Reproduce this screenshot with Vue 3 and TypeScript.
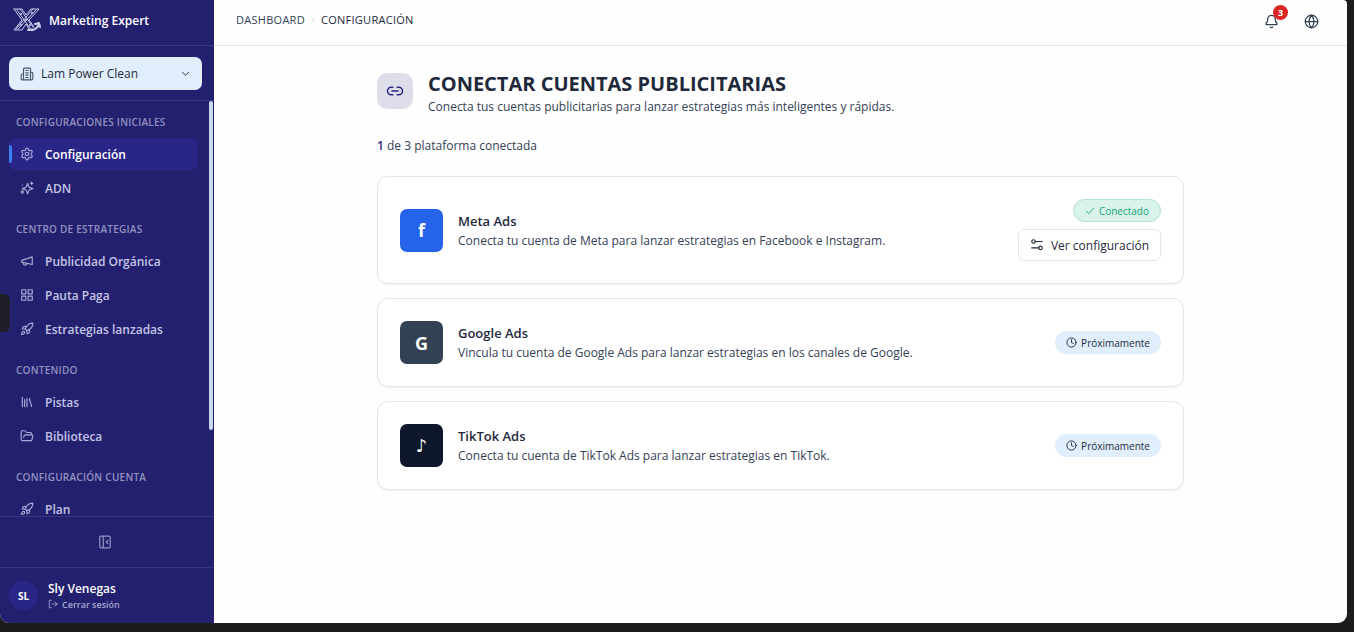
<script setup lang="ts">
interface NavItem {
  label: string
  icon: string
  active?: boolean
}
interface NavGroup {
  title: string
  items: NavItem[]
}
interface Platform {
  id: string
  name: string
  mark: string
  description: string
  connected: boolean
}

const icons: Record<string, string[]> = {
  settings: [
    'M9.671 4.136a2.34 2.34 0 0 1 4.659 0 2.34 2.34 0 0 0 3.319 1.915 2.34 2.34 0 0 1 2.33 4.033 2.34 2.34 0 0 0 0 3.831 2.34 2.34 0 0 1-2.33 4.033 2.34 2.34 0 0 0-3.319 1.915 2.34 2.34 0 0 1-4.659 0 2.34 2.34 0 0 0-3.32-1.915 2.34 2.34 0 0 1-2.33-4.033 2.34 2.34 0 0 0 0-3.831A2.34 2.34 0 0 1 6.35 6.051a2.34 2.34 0 0 0 3.319-1.915',
    'M9 12a3 3 0 1 0 6 0a3 3 0 1 0-6 0',
  ],
  sparkles: [
    'M13 4l2 5.500a3 3 0 0 0 1.500 1.500L22 13l-5.500 2a3 3 0 0 0-1.500 1.500L13 22l-2-5.500A3 3 0 0 0 9.500 15L4 13l5.500-2A3 3 0 0 0 11 9.500z',
    'M20 2v4M22 4h-4M2 19a2 2 0 1 0 4 0a2 2 0 1 0-4 0M4 7h.01',
  ],
  megaphone: ['M21 5 3 11v3l18 4zM11.600 16.800a3 3 0 1 1-5.800-1.600'],
  grid: ['M3 3h7v7H3zM14 3h7v7h-7zM14 14h7v7h-7zM3 14h7v7H3z'],
  rocket: [
    'M4.500 16.500c-1.500 1.260-2 5-2 5s3.740-.5 5-2c.71-.84.7-2.130-.09-2.910a2.180 2.180 0 0 0-2.910-.09z',
    'M12 15l-3-3a22 22 0 0 1 2-3.950A12.880 12.880 0 0 1 22 2c0 2.720-.78 7.500-6 11a22.350 22.350 0 0 1-4 2z',
    'M9 12H4s.55-3.030 2-4c1.620-1.080 5 0 5 0M12 15v5s3.030-.55 4-2c1.080-1.620 0-5 0-5',
  ],
  library: ['M4 4v16M8 8v12M12 6v14M16 6l4 14'],
  folder: [
    'M6 14l1.500-2.900A2 2 0 0 1 9.240 10H20a2 2 0 0 1 1.940 2.500l-1.540 6a2 2 0 0 1-1.950 1.500H4a2 2 0 0 1-2-2V5a2 2 0 0 1 2-2h3.900a2 2 0 0 1 1.690.9l.81 1.200a2 2 0 0 0 1.670.9H18a2 2 0 0 1 2 2v2',
  ],
}

const groups: NavGroup[] = [
  {
    title: 'CONFIGURACIONES INICIALES',
    items: [
      { label: 'Configuración', icon: 'settings', active: true },
      { label: 'ADN', icon: 'sparkles' },
    ],
  },
  {
    title: 'CENTRO DE ESTRATEGIAS',
    items: [
      { label: 'Publicidad Orgánica', icon: 'megaphone' },
      { label: 'Pauta Paga', icon: 'grid' },
      { label: 'Estrategias lanzadas', icon: 'rocket' },
    ],
  },
  {
    title: 'CONTENIDO',
    items: [
      { label: 'Pistas', icon: 'library' },
      { label: 'Biblioteca', icon: 'folder' },
    ],
  },
  {
    title: 'CONFIGURACIÓN CUENTA',
    items: [{ label: 'Plan', icon: 'rocket' }],
  },
]

const platforms: Platform[] = [
  {
    id: 'meta',
    name: 'Meta Ads',
    mark: 'f',
    description: 'Conecta tu cuenta de Meta para lanzar estrategias en Facebook e Instagram.',
    connected: true,
  },
  {
    id: 'google',
    name: 'Google Ads',
    mark: 'G',
    description: 'Vincula tu cuenta de Google Ads para lanzar estrategias en los canales de Google.',
    connected: false,
  },
  {
    id: 'tiktok',
    name: 'TikTok Ads',
    mark: '♪',
    description: 'Conecta tu cuenta de TikTok Ads para lanzar estrategias en TikTok.',
    connected: false,
  },
]
</script>

<template>
  <div class="frame">
    <div class="window">
      <aside class="sidebar">
        <div class="brand">
          <svg class="logo" viewBox="0 0 28 26" fill="none" stroke="currentColor" aria-hidden="true">
            <path d="M1 2h8l4 6 5-6h8L16 13l5 7M1 2l8 11L1 23h8l4-6 3 5h4M4 3l13 18M7 2l13 18M23 3L5 22M20 2L3 22" />
            <path d="M15 23h5c3-1 5-3 6-6M22 17l4-1 1 4" stroke-width="2" />
            <path d="M8 7h.01M13 13h.01M17 18h.01M19 6h.01M8 18h.01" stroke-width="2" stroke-linecap="round" />
          </svg>
          <span>Marketing Expert</span>
        </div>
        <div class="workspace">
          <button type="button" class="workspace-button">
            <svg class="icon-m" viewBox="0 0 24 24" aria-hidden="true">
              <path d="M6 22V4a2 2 0 0 1 2-2h8a2 2 0 0 1 2 2v18zM6 12H4a2 2 0 0 0-2 2v6a2 2 0 0 0 2 2h2M18 9h2a2 2 0 0 1 2 2v9a2 2 0 0 1-2 2h-2M10 6h4M10 10h4M10 14h4M10 18h4" />
            </svg>
            <span>Lam Power Clean</span>
            <svg class="icon-s chevron" viewBox="0 0 24 24" aria-hidden="true"><path d="M5 9l7 7 7-7" /></svg>
          </button>
        </div>
        <nav class="nav">
          <section v-for="group in groups" :key="group.title" class="group">
            <h2>{{ group.title }}</h2>
            <a v-for="item in group.items" :key="item.label" href="#" class="nav-item" :class="{ active: item.active }">
              <svg class="icon-m" viewBox="0 0 24 24" aria-hidden="true">
                <path v-for="d in icons[item.icon]" :key="d" :d="d" />
              </svg>
              <span>{{ item.label }}</span>
            </a>
          </section>
          <span class="scroll-thumb"></span>
        </nav>
        <div class="collapse">
          <button type="button" aria-label="Contraer menú">
            <svg class="icon-m" viewBox="0 0 24 24" aria-hidden="true">
              <path d="M5 2h14a2 2 0 0 1 2 2v16a2 2 0 0 1-2 2H5a2 2 0 0 1-2-2V4a2 2 0 0 1 2-2zM9 2v20M17 9l-3 3 3 3" />
            </svg>
          </button>
        </div>
        <div class="user">
          <span class="avatar">SL</span>
          <div class="user-info">
            <strong>Sly Venegas</strong>
            <button type="button">
              <svg class="icon-xs" viewBox="0 0 24 24" aria-hidden="true"><path d="M8 3H3v18h5M10 12h12M17 7l5 5-5 5" /></svg>
              <span>Cerrar sesión</span>
            </button>
          </div>
        </div>
        <span class="edge-tab"></span>
      </aside>

      <div class="main">
        <header class="topbar">
          <nav class="crumbs" aria-label="Ruta">
            <a href="#">DASHBOARD</a>
            <svg viewBox="0 0 6 8" aria-hidden="true"><path d="M2 2l2 2-2 2" /></svg>
            <span>CONFIGURACIÓN</span>
          </nav>
          <div class="tools">
            <button type="button" aria-label="Notificaciones">
              <svg class="icon-l" viewBox="0 0 24 24" aria-hidden="true">
                <path d="M10.300 21a2 2 0 0 0 3.400 0M3.300 15.300A1 1 0 0 0 4 17h16a1 1 0 0 0 .7-1.700C19.400 14 18 12.500 18 8A6 6 0 0 0 6 8c0 4.500-1.400 6-2.700 7.300" />
              </svg>
              <span class="count">3</span>
            </button>
            <button type="button" aria-label="Idioma">
              <svg class="icon-l" viewBox="0 0 24 24" aria-hidden="true">
                <circle cx="12" cy="12" r="10" /><path d="M12 2a14.500 14.500 0 0 0 0 20 14.500 14.500 0 0 0 0-20M2 12h20" />
              </svg>
            </button>
          </div>
        </header>
        <main class="content">
          <div class="heading">
            <span class="heading-icon">
              <svg viewBox="0 0 24 24" aria-hidden="true"><path d="M9 17H7A5 5 0 0 1 7 7h2M15 7h2a5 5 0 1 1 0 10h-2M8 12h8" /></svg>
            </span>
            <div>
              <h1>CONECTAR CUENTAS PUBLICITARIAS</h1>
              <p>Conecta tus cuentas publicitarias para lanzar estrategias más inteligentes y rápidas.</p>
            </div>
          </div>
          <p class="summary"><b>1</b> de 3 plataforma conectada</p>
          <div class="cards">
            <article v-for="p in platforms" :key="p.id" class="card">
              <span class="mark" :class="p.id">{{ p.mark }}</span>
              <div class="card-text">
                <h3>{{ p.name }}</h3>
                <p>{{ p.description }}</p>
              </div>
              <div v-if="p.connected" class="actions">
                <span class="badge ok">
                  <svg class="icon-xs" viewBox="0 0 24 24" aria-hidden="true"><path d="M21 5L9 18l-6-6" /></svg>Conectado
                </span>
                <button type="button" class="configure">
                  <svg class="icon-m" viewBox="0 0 24 24" aria-hidden="true">
                    <path d="M9 6h12M15 17H3" /><circle cx="18" cy="17" r="3" /><circle cx="6" cy="6" r="3" />
                  </svg>
                  <span>Ver configuración</span>
                </button>
              </div>
              <span v-else class="badge soon">
                <svg class="icon-s" viewBox="0 0 24 24" aria-hidden="true"><circle cx="12" cy="12" r="10" /><path d="M12 6v6l4 2" /></svg>Próximamente
              </span>
            </article>
          </div>
        </main>
      </div>
    </div>
  </div>
</template>

<style>
body {
  background: #1c1c1c;
}
</style>

<style scoped>
* {
  box-sizing: border-box;
}
.frame {
  display: flex;
  height: 100vh;
  padding: 0 7px 9px 0;
  background: #1c1c1c;
  font-family: 'Open Sans', 'Noto Sans', sans-serif;
  font-size: 12px;
  color: #1e293b;
}
.window {
  display: flex;
  flex: 1;
  min-width: 0;
  overflow: hidden;
  border-radius: 0 4px 9px 9px;
  background: #fefefe;
}
h1, h2, h3, p {
  margin: 0;
}
a {
  color: inherit;
  text-decoration: none;
}
button {
  display: flex;
  align-items: center;
  padding: 0;
  border: 0;
  background: none;
  color: inherit;
  font: inherit;
  cursor: pointer;
}
svg {
  flex: none;
  fill: none;
  stroke: currentColor;
  stroke-width: 2;
  stroke-linecap: round;
  stroke-linejoin: round;
}
.icon-xs { width: 10px; height: 10px; }
.icon-s { width: 11px; height: 11px; }
.icon-m { width: 14px; height: 14px; }
.icon-l { width: 15px; height: 15px; }

.sidebar {
  position: relative;
  display: flex;
  flex-direction: column;
  flex: none;
  width: 214px;
  background: #23206f;
  color: #c3c4e4;
}
.brand {
  display: flex;
  align-items: center;
  gap: 8px;
  flex: none;
  height: 46px;
  padding: 0 13px 5px;
  border-bottom: 1px solid #39377f;
  color: #ffffff;
  font-weight: 600;
}
.logo {
  width: 28px;
  height: 26px;
  color: #c8cbe8;
  stroke-width: 1;
}
.workspace {
  flex: none;
  padding: 11px 12px 10px 9px;
  border-bottom: 1px solid #39377f;
}
.workspace-button {
  width: 100%;
  height: 33px;
  gap: 7px;
  padding: 0 11px;
  border-radius: 7px;
  background: #e1effc;
  color: #1e293b;
  font-weight: 500;
}
.workspace-button .icon-m {
  color: #475569;
}
.chevron {
  margin-left: auto;
}
.nav {
  position: relative;
  flex: 1;
  min-height: 0;
  overflow: hidden;
  padding: 13px 16px 0 9px;
}
.group {
  margin-bottom: 17px;
}
.group h2 {
  margin-bottom: 8px;
  padding-left: 7px;
  color: #9392bf;
  font-size: 10px;
  font-weight: 600;
  line-height: 16px;
  letter-spacing: 0.025em;
}
.nav-item {
  display: flex;
  align-items: center;
  gap: 11px;
  height: 32px;
  padding-left: 11px;
  border-radius: 7px;
  font-weight: 600;
}
.nav-item + .nav-item {
  margin-top: 2px;
}
.nav-item svg {
  color: #a9a9d6;
}
.nav-item.active {
  position: relative;
  background: #292688;
  color: #ffffff;
}
.nav-item.active::before {
  content: '';
  position: absolute;
  left: 0;
  top: 7px;
  width: 3px;
  height: 18px;
  border-radius: 0 3px 3px 0;
  background: #3b82f6;
}
.scroll-thumb {
  position: absolute;
  top: 0;
  right: 1px;
  width: 4px;
  height: 329px;
  border-radius: 2px;
  background: #c8d8ef;
}
.collapse {
  display: flex;
  align-items: center;
  justify-content: center;
  flex: none;
  height: 51px;
  padding-right: 4px;
  border-top: 1px solid #39377f;
  color: #9897c6;
}
.user {
  display: flex;
  align-items: center;
  gap: 10px;
  flex: none;
  height: 56px;
  padding-left: 9px;
  border-top: 1px solid #39377f;
}
.avatar {
  display: flex;
  align-items: center;
  justify-content: center;
  width: 29px;
  height: 29px;
  border-radius: 50%;
  background: #292688;
  color: #ffffff;
  font-size: 10px;
  font-weight: 700;
}
.user-info strong {
  display: block;
  color: #ffffff;
  font-weight: 600;
  line-height: 17px;
}
.user-info button {
  gap: 4px;
  color: #a7a6cf;
  font-size: 9px;
  font-weight: 600;
  line-height: 15px;
}
.edge-tab {
  position: absolute;
  left: 0;
  top: 294px;
  width: 10px;
  height: 38px;
  border-radius: 0 6px 6px 0;
  background: #1f1f27;
}

.main {
  flex: 1;
  min-width: 0;
}
.topbar {
  display: flex;
  align-items: center;
  justify-content: space-between;
  height: 46px;
  padding: 0 28px 0 22px;
  border-bottom: 1px solid #e2e6ea;
}
.crumbs {
  display: flex;
  align-items: center;
  gap: 5px;
  padding-bottom: 6px;
  color: #334155;
  font-size: 11px;
  font-weight: 500;
  letter-spacing: 0.025em;
}
.crumbs svg {
  width: 6px;
  height: 8px;
  color: #dde1e6;
  stroke-width: 1;
}
.crumbs span {
  color: #1e293b;
}
.tools {
  display: flex;
  gap: 25px;
  padding-bottom: 3px;
  color: #334155;
}
.tools button {
  position: relative;
}
.count {
  position: absolute;
  left: 9px;
  top: -9px;
  width: 15px;
  height: 15px;
  border-radius: 50%;
  background: #dc2626;
  color: #ffffff;
  font-size: 9px;
  font-weight: 700;
  line-height: 15px;
  text-align: center;
}
.content {
  max-width: 807px;
  margin: 0 auto;
  padding-top: 25px;
}
.heading {
  display: flex;
  align-items: flex-start;
  gap: 15px;
}
.heading-icon {
  display: flex;
  align-items: center;
  justify-content: center;
  width: 36px;
  height: 36px;
  margin-top: 2px;
  border-radius: 10px;
  background: #dedeeb;
  color: #2b2680;
}
.heading-icon svg {
  width: 18px;
  height: 18px;
}
h1 {
  color: #1e293b;
  font-size: 20px;
  font-weight: 700;
  line-height: 26px;
}
.heading p,
.summary,
.card p {
  color: #334155;
  line-height: 20px;
}
.summary {
  margin-top: 19px;
}
.summary b {
  color: #2b2680;
  font-weight: 600;
}
.cards {
  display: flex;
  flex-direction: column;
  gap: 14px;
  margin-top: 20px;
}
.card {
  display: flex;
  align-items: center;
  gap: 15px;
  padding: 22px;
  border: 1px solid #e1e7ea;
  border-radius: 11px;
  background: #ffffff;
  box-shadow: 0 1px 2px #0f172a0d;
}
.mark {
  display: flex;
  align-items: center;
  justify-content: center;
  width: 43px;
  height: 43px;
  border-radius: 7px;
  color: #ffffff;
  font-size: 18px;
  font-weight: 700;
}
.meta { background: #2563eb; }
.google { background: #334155; }
.tiktok {
  background: #0f172a;
  font-family: 'DejaVu Sans', sans-serif;
}
.card-text {
  flex: 1;
  padding-top: 1px;
}
.card h3 {
  font-size: 13px;
  font-weight: 600;
  line-height: 20px;
}
.actions {
  display: flex;
  flex-direction: column;
  align-items: flex-end;
  gap: 7px;
}
.badge {
  display: flex;
  align-items: center;
  gap: 4px;
  height: 23px;
  padding: 0 11px;
  border-radius: 12px;
  font-size: 10px;
  font-weight: 500;
}
.ok {
  border: 1px solid #b0e3d0;
  background: #d9f3ea;
  color: #12a575;
}
.soon {
  background: #e1effc;
  color: #1e293b;
}
.configure {
  gap: 7px;
  height: 32px;
  padding: 0 11px;
  border: 1px solid #e1e7ea;
  border-radius: 6px;
  font-weight: 500;
}
</style>
